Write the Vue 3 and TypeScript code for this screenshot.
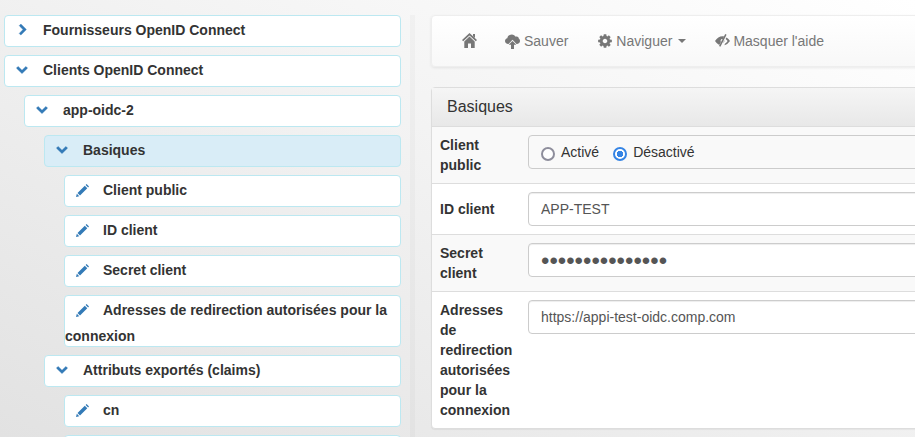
<template>
  <div class="page">
    <div class="tree">
      <div
        v-for="node in nodes"
        :key="node.label"
        class="node"
        :class="[`level-${node.level}`, { selected: node.selected }]"
      >
        <span class="handle">
          <svg v-if="node.icon === 'right'" class="chevron right" viewBox="0 0 1792 1792">
            <path d="M1363 877l-742 742q-19 19-45 19t-45-19l-166-166q-19-19-19-45t19-45l531-531-531-531q-19-19-19-45t19-45l166-166q19-19 45-19t45 19l742 742q19 19 19 45t-19 45z" />
          </svg>
          <svg v-else-if="node.icon === 'down'" class="chevron" viewBox="0 0 1792 1792">
            <path d="M1683 808l-742 741q-19 19-45 19t-45-19l-742-741q-19-19-19-45.500t19-45.500l166-165q19-19 45-19t45 19l531 531 531-531q19-19 45-19t45 19l166 165q19 19 19 45.500t-19 45.500z" />
          </svg>
          <svg v-else class="pencil" viewBox="0 0 13 13">
            <path d="M0 13 L.8 9.700 L3.300 12.200 Z M1.500 9 L8.800 1.700 L11.300 4.200 L4 11.500 Z M9.600 .9 L10.300 .2 Q10.500 0 10.800 .2 L12.800 2.200 Q13 2.500 12.800 2.700 L12.100 3.400 Z" />
          </svg>
        </span>
        <span>{{ node.label }}</span>
      </div>
    </div>

    <div class="divider"></div>

    <main class="content">
      <nav class="toolbar">
        <a class="tool">
          <svg class="ico home" viewBox="0 0 15 15">
            <path d="M7.500 0 L15 7 L13.800 8.300 L7.500 2.400 L1.200 8.300 L0 7 Z" />
            <path d="M11 1 H13 V5 L11 3.200 Z" />
            <path d="M2.300 8.400 L7.500 3.400 L12.700 8.400 V15 H9 V10.500 H6 V15 H2.300 Z" />
          </svg>
        </a>
        <a class="tool">
          <svg class="ico cloud" viewBox="0 0 15 15">
            <path d="M3.500 10 H3.200 C1.400 10 0 8.800 0 7.100 C0 5.700 1 4.600 2.300 4.300 C2.700 2 4.600 .4 6.800 .4 C8.500 .4 10 1.400 10.700 2.800 C11 2.700 11.300 2.600 11.700 2.600 C12.800 2.600 13.700 3.400 13.800 4.600 C14.500 5.100 15 6 15 7.100 C15 8.800 13.600 10 11.800 10 H11.500 L7.500 5.800 Z" />
            <path d="M7.500 7 L11.300 10.800 H9 V15 H6 V10.800 H3.700 Z" />
          </svg>
          <span>Sauver</span>
        </a>
        <a class="tool">
          <svg class="ico cog" viewBox="0 0 1792 1792">
            <path d="M1152 896q0-106-75-181t-181-75-181 75-75 181 75 181 181 75 181-75 75-181zm512-109v222q0 12-8 23t-20 13l-185 28q-19 54-39 91 35 50 107 138 10 12 10 25t-9 23q-27 37-99 108t-94 71q-12 0-26-9l-138-108q-44 23-91 38-16 136-29 186-7 28-36 28h-222q-14 0-24.500-8.500t-11.500-21.500l-28-184q-49-16-90-37l-141 107q-10 9-25 9-14 0-25-11-126-114-165-168-7-10-7-23 0-12 8-23 15-21 51-66.500t54-70.500q-27-50-41-99l-183-27q-13-2-21-12.500t-8-23.500v-222q0-12 8-23t19-13l186-28q14-46 39-92-40-57-107-138-10-12-10-24 0-10 9-23 26-36 98.500-107.500t94.500-71.500q13 0 26 10l138 107q44-23 91-38 16-136 29-186 7-28 36-28h222q14 0 24.500 8.500t11.500 21.500l28 184q49 16 90 37l142-107q9-9 24-9 13 0 25 10 129 119 165 170 7 8 7 22 0 12-8 23-15 21-51 66.500t-54 70.500q26 50 41 98l183 28q13 2 21 12.500t8 23.500z" />
          </svg>
          <span>Naviguer</span>
          <i class="caret"></i>
        </a>
        <a class="tool">
          <svg class="ico eye" viewBox="0 0 15 14">
            <path fill-rule="evenodd" d="M9.300 2.500 Q8.400 2.200 7.500 2.200 Q3 2.200 0 7 Q1.700 9.700 4.200 11 Z M6.200 5.300 Q5.100 6.500 5.900 8.200 L7.600 5 Q6.800 4.900 6.200 5.300 Z" />
            <path d="M10.200 0 L11.600 .8 L5.400 12.800 L4 12 Z" />
            <path d="M11.500 3.500 Q13.600 4.800 15 7 Q13 10 9.500 11.300 L9.900 9.700 Q11.700 8.700 12.600 7 Q11.800 5.800 10.600 5 Z" />
            <path d="M9.400 6 Q9.800 8 8 9.300 Z" />
          </svg>
          <span>Masquer l'aide</span>
        </a>
      </nav>

      <section class="panel">
        <h3 class="panel-title">Basiques</h3>

        <div class="row striped">
          <div class="row-label">Client public</div>
          <div class="row-value">
            <div class="radios">
              <label class="radio"><input type="radio" name="public" />Activé</label>
              <label class="radio"><input type="radio" name="public" checked />Désactivé</label>
            </div>
          </div>
        </div>

        <div class="row">
          <div class="row-label">ID client</div>
          <div class="row-value">
            <input class="field" type="text" value="APP-TEST" />
          </div>
        </div>

        <div class="row striped">
          <div class="row-label">Secret client</div>
          <div class="row-value">
            <input class="field secret" type="password" value="secret-oidc-app" />
          </div>
        </div>

        <div class="row">
          <div class="row-label">Adresses de redirection autorisées pour la connexion</div>
          <div class="row-value">
            <input class="field" type="text" value="https://appi-test-oidc.comp.com" />
          </div>
        </div>
      </section>
    </main>
  </div>
</template>

<script setup lang="ts">
interface TreeNode {
  label: string;
  level: number;
  icon: 'right' | 'down' | 'edit';
  selected?: boolean;
}

// the last node is only cut off by the bottom of the window, its label is not visible
const nodes: TreeNode[] = [
  { label: 'Fournisseurs OpenID Connect', level: 0, icon: 'right' },
  { label: 'Clients OpenID Connect', level: 0, icon: 'down' },
  { label: 'app-oidc-2', level: 1, icon: 'down' },
  { label: 'Basiques', level: 2, icon: 'down', selected: true },
  { label: 'Client public', level: 3, icon: 'edit' },
  { label: 'ID client', level: 3, icon: 'edit' },
  { label: 'Secret client', level: 3, icon: 'edit' },
  { label: 'Adresses de redirection autorisées pour la connexion', level: 3, icon: 'edit' },
  { label: 'Attributs exportés (claims)', level: 2, icon: 'down' },
  { label: 'cn', level: 3, icon: 'edit' },
  { label: '', level: 3, icon: 'edit' },
];
</script>

<style>
html,
body {
  margin: 0;
  height: 100%;
  overflow: hidden;
}

body {
  background: linear-gradient(to top right, #e2e2e2, #ffffff);
}
</style>

<style scoped>
.page {
  display: flex;
  width: 1200px;
  height: 437px;
  overflow: hidden;
  font-family: "Liberation Sans", Arial, sans-serif;
  font-size: 14px;
  line-height: 20px;
  color: #333;
}

.tree {
  box-sizing: border-box;
  flex: 0 0 401px;
  padding: 15px 0 0 4px;
}

.node {
  margin-bottom: 8px;
  border: 1px solid #bce8f1;
  border-radius: 4px;
  background: #fff;
  font-weight: bold;
}

.node.selected {
  background: #d9edf7;
}

.level-1 {
  margin-left: 20px;
}

.level-2 {
  margin-left: 40px;
}

.level-3 {
  margin-left: 60px;
}

.handle {
  display: inline-block;
  box-sizing: border-box;
  width: 38px;
  height: 30px;
  vertical-align: -11px;
  padding-left: 11px;
  color: #337ab7;
}

.handle svg {
  display: block;
  fill: currentColor;
}

.chevron {
  width: 12px;
  height: 12px;
  margin-top: 7px;
  stroke: currentColor;
  stroke-width: 60;
}

.chevron.right {
  margin-top: 8px;
  margin-left: 1px;
}

.pencil {
  width: 13px;
  height: 13px;
  margin-top: 8px;
}

.divider {
  flex: 0 0 5px;
  margin: 15px 0 0 9px;
  background: rgba(0, 0, 0, 0.025);
}

.content {
  flex: 1;
  margin-left: 16px;
  padding-top: 15px;
}

.toolbar {
  display: flex;
  height: 50px;
  margin-bottom: 20px;
  padding: 0 15px;
  border: 1px solid #eeeeee;
  border-radius: 4px;
  background: linear-gradient(to bottom, #ffffff, #f8f8f8);
  box-shadow: 0 1px 3px rgba(0, 0, 0, 0.08);
}

.tool {
  display: flex;
  align-items: center;
  gap: 4px;
  padding: 0 15px;
  color: #777;
}

.ico {
  flex: none;
  fill: currentColor;
}

.home {
  width: 15px;
  height: 15px;
  margin: -1px -1px 0 0;
}

.cloud {
  width: 15px;
  height: 15px;
  margin: 1px 0 0 -1px;
}

.cog {
  width: 16px;
  height: 16px;
  margin: 0 -1px 0 -1px;
}

.eye {
  width: 15px;
  height: 14px;
  margin: 0 -1px 0 -1px;
}

.caret {
  width: 0;
  height: 0;
  margin-left: 2px;
  border-top: 4px solid #777;
  border-right: 4px solid transparent;
  border-left: 4px solid transparent;
}

.panel {
  border: 1px solid #dddddd;
  border-radius: 4px;
  background: #fff;
  box-shadow: 0 1px 1px rgba(0, 0, 0, 0.05);
}

.panel-title {
  margin: 0;
  padding: 10px 15px;
  border-bottom: 1px solid #dddddd;
  background: linear-gradient(to bottom, #f5f5f5, #e8e8e8);
  font-size: 16px;
  font-weight: normal;
  line-height: 18px;
}

.row {
  display: grid;
  grid-template-columns: 88px 1fr;
  border-top: 1px solid #dddddd;
}

.panel-title + .row {
  border-top: 0;
}

.row.striped {
  background: #f9f9f9;
}

.row-label {
  align-self: center;
  padding: 8px;
  font-weight: bold;
}

.row-value {
  padding: 8px;
}

.radios {
  box-sizing: border-box;
  display: flex;
  align-items: center;
  gap: 14px;
  height: 34px;
  padding: 0 12px;
  border: 1px solid #cccccc;
  border-radius: 4px;
}

.radio {
  display: flex;
  align-items: center;
  gap: 6px;
}

.radio input {
  appearance: none;
  box-sizing: border-box;
  width: 14px;
  height: 14px;
  margin: 3px 0 0;
  border: 2px solid #8e8e9c;
  border-radius: 50%;
  background: #fff;
}

.radio input:checked {
  border-color: #3584e4;
  background: radial-gradient(circle, #3584e4 0 3px, #fff 3.5px);
}

.field {
  display: block;
  box-sizing: border-box;
  width: 100%;
  height: 34px;
  padding: 6px 12px;
  border: 1px solid #cccccc;
  border-radius: 4px;
  background: #fff;
  box-shadow: inset 0 1px 1px rgba(0, 0, 0, 0.075);
  font-family: inherit;
  font-size: 14px;
  color: #555;
}

.field.secret {
  padding: 1px 12px 0;
  font-size: 24px;
}
</style>
